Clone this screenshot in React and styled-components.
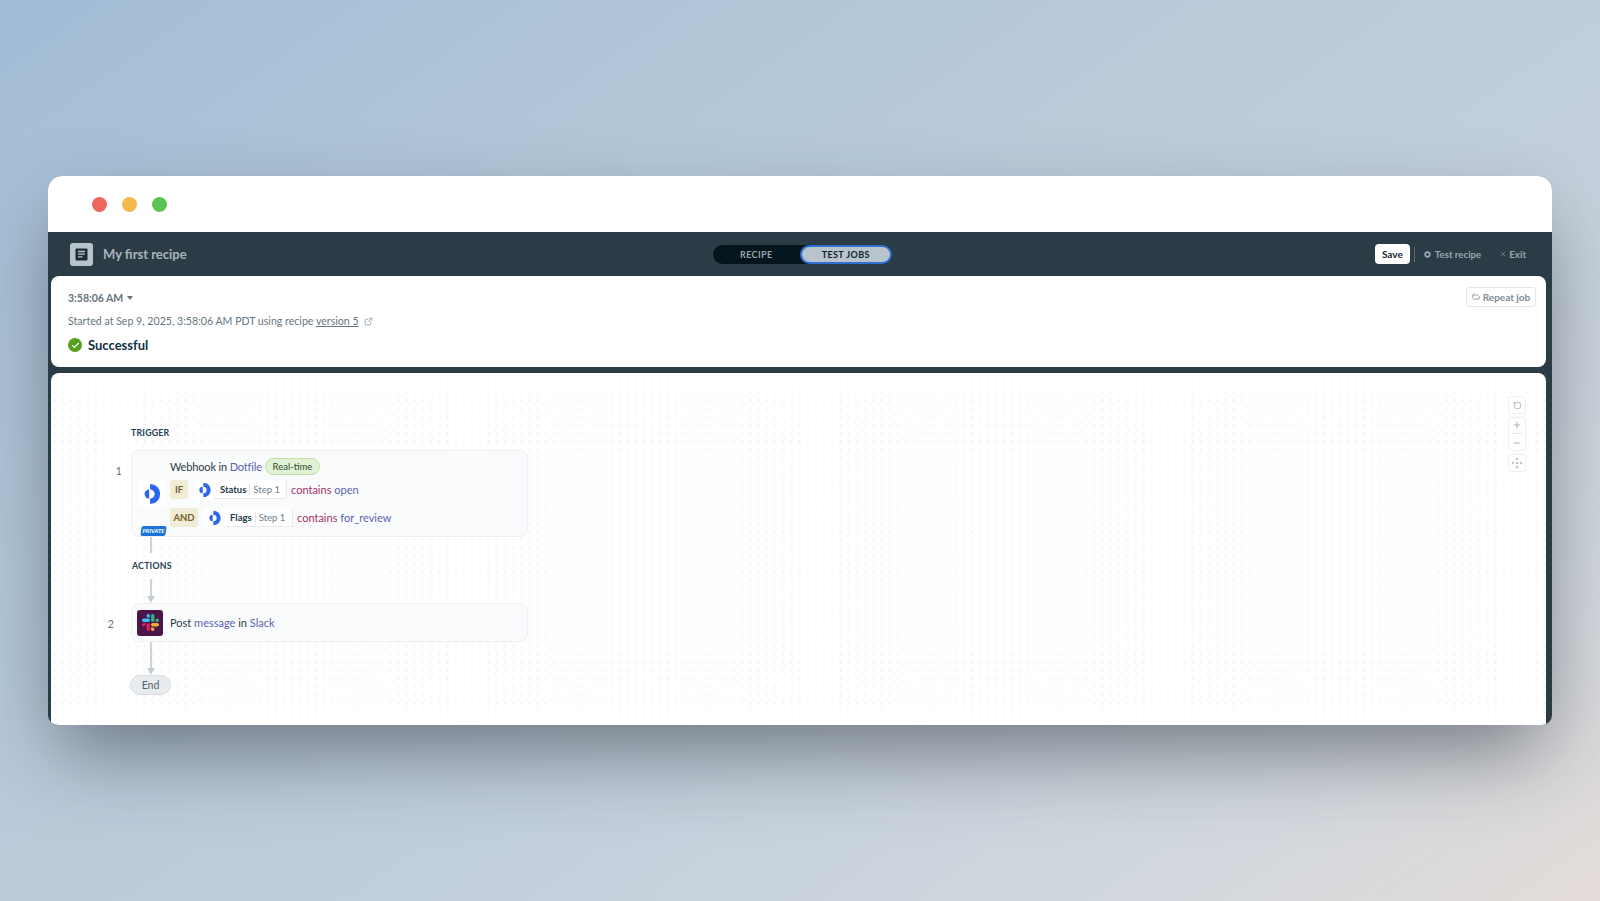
import styled, { createGlobalStyle } from "styled-components";
import { Check, ExternalLink, Minus, Plus, RotateCcw, X } from "lucide-react";

const GlobalStyle = createGlobalStyle`
  html, body {
    margin: 0;
    height: 901px;
    overflow: hidden;
  }
  body {
    font-family: Lato, "Noto Sans", sans-serif;
    color: #2c3c46;
  }
`;

const Page = styled.div`
  height: 901px;
  box-sizing: border-box;
  padding: 176px 48px 0;
  background: linear-gradient(145deg, #a2bcd6 0%, #b4c7d8 30%, #c3d0dc 62%, #d3d8de 85%, #e4dcd8 100%);
`;

const Window = styled.div`
  height: 549px;
  display: flex;
  flex-direction: column;
  border-radius: 14px 14px 10px 10px;
  overflow: hidden;
  background: #2c3c46;
  box-shadow: 0 35px 80px -10px rgba(40, 45, 55, 0.55);
`;

const TitleBar = styled.div`
  height: 56px;
  flex: none;
  display: flex;
  align-items: center;
  gap: 15px;
  padding-left: 44px;
  background: #fff;
`;

const Light = styled.span`
  width: 15px;
  height: 15px;
  border-radius: 50%;
  background: ${(p) => p.$color};
`;

const Toolbar = styled.div`
  height: 44px;
  flex: none;
  display: grid;
  grid-template-columns: 1fr auto 1fr;
  align-items: center;
  padding: 0 26px 0 22px;
`;

const Brand = styled.div`
  display: flex;
  align-items: center;
  gap: 10px;
  font-size: 13px;
  font-weight: 700;
  color: #abb4bc;
`;

const BrandIcon = styled.span`
  width: 23px;
  height: 23px;
  border-radius: 3px;
  background: #b9c3cc;
  display: flex;
  align-items: center;
  justify-content: center;
`;

const Toggle = styled.div`
  display: flex;
  width: 179px;
  height: 19px;
  margin-left: 8px;
  border-radius: 10px;
  background: #04151d;
`;

const ToggleItem = styled.div`
  flex: 1;
  display: flex;
  align-items: center;
  justify-content: center;
  box-sizing: border-box;
  border-radius: 10px;
  font-size: 9px;
  font-weight: 700;
  letter-spacing: 0.4px;
  color: ${(p) => (p.$active ? "#10242e" : "#9aa5ad")};
  background: ${(p) => (p.$active ? "#b9c3cc" : "transparent")};
  border: ${(p) => (p.$active ? "2px solid #2f6fd2" : "none")};
`;

const Actions = styled.div`
  display: flex;
  align-items: center;
  justify-content: flex-end;
  font-size: 9.7px;
  font-weight: 700;
  color: #9aa6ae;
`;

const SaveButton = styled.button`
  width: 35px;
  height: 20px;
  padding: 0;
  border: 0;
  border-radius: 4px;
  background: #fff;
  font: 700 10px Lato, sans-serif;
  color: #10242e;
`;

const Divider = styled.span`
  width: 1px;
  height: 15px;
  margin: 0 9px 0 4px;
  background: #5a6871;
`;

const ToolLink = styled.span`
  display: flex;
  align-items: center;
  gap: ${(p) => p.$inner}px;
  margin-left: ${(p) => p.$gap || 0}px;
`;

const Panel = styled.div`
  margin: 0 6px 0 3px;
  background: #fff;
  border-radius: 8px;
  position: relative;
`;

const JobPanel = styled(Panel)`
  height: 91px;
  box-sizing: border-box;
  padding: 15px 17px 0;
  flex: none;
`;

const JobTime = styled.div`
  display: flex;
  align-items: center;
  gap: 4px;
  height: 14px;
  font-size: 10.5px;
  font-weight: 700;
  color: #66767f;
`;

const Caret = styled.span`
  border-left: 3.5px solid transparent;
  border-right: 3.5px solid transparent;
  border-top: 4px solid #66767f;
`;

const JobMeta = styled.div`
  display: flex;
  align-items: center;
  gap: 5px;
  margin-top: 9px;
  height: 14px;
  font-size: 10.6px;
  color: #66767f;
`;

const VersionLink = styled.span`
  text-decoration: underline;
`;

const JobStatus = styled.div`
  display: flex;
  align-items: center;
  gap: 6px;
  margin-top: 9px;
  font-size: 13px;
  font-weight: 700;
  color: #10303f;
`;

const StatusDot = styled.span`
  width: 14px;
  height: 14px;
  border-radius: 50%;
  background: #55a01e;
  display: flex;
  align-items: center;
  justify-content: center;
`;

const RepeatButton = styled.div`
  position: absolute;
  top: 11px;
  right: 10px;
  width: 70px;
  height: 20px;
  box-sizing: border-box;
  border: 1px solid #e2e7eb;
  border-radius: 3px;
  display: flex;
  align-items: center;
  justify-content: center;
  gap: 3px;
  font-size: 10px;
  font-weight: 700;
  color: #7c8c98;
`;

const CanvasPanel = styled(Panel)`
  flex: 1;
  margin-top: 6px;
  margin-bottom: 0;
  padding: 54px 0 0 80px;
  border-radius: 8px 8px 0 0;
  background-color: #fff;
  background-image: radial-gradient(circle, #e6e9ec 0.7px, transparent 1px);
  background-size: 8.2px 8.2px;
  background-position: 7.6px -1.1px;
`;

const SectionLabel = styled.div`
  height: 12px;
  line-height: 12px;
  font-size: 8.8px;
  font-weight: 700;
  letter-spacing: 0.2px;
  color: #254352;
  margin-left: ${(p) => p.$indent || 0}px;
  margin-top: ${(p) => p.$top || 0}px;
`;

const StepRow = styled.div`
  position: relative;
  width: 397px;
`;

const StepNumber = styled.span`
  position: absolute;
  top: ${(p) => p.$top}px;
  right: calc(100% + ${(p) => p.$gap}px);
  font-size: 11px;
  color: #5f7480;
`;

const StepCard = styled.div`
  box-sizing: border-box;
  height: ${(p) => p.$height}px;
  margin-top: ${(p) => p.$top || 0}px;
  display: flex;
  align-items: center;
  gap: ${(p) => p.$gap}px;
  padding-left: ${(p) => p.$pad}px;
  border: 1px solid #eef1f4;
  border-radius: 8px;
  background: #fafbfd;
  font-size: 11px;
`;

const LogoBox = styled.span`
  width: ${(p) => p.$size}px;
  height: ${(p) => p.$size}px;
  flex: none;
  display: flex;
  align-items: center;
  justify-content: center;
  background: #fff;
  border-radius: 3px;
`;

const SlackBox = styled(LogoBox)`
  background: #4a154b;
`;

const StepBody = styled.div`
  display: flex;
  flex-direction: column;
  padding-bottom: 2px;
`;

const StepLine = styled.div`
  display: flex;
  align-items: center;
  height: ${(p) => p.$height || 17}px;
  margin-top: ${(p) => p.$top || 0}px;
`;

const StepTitle = styled.span`
  letter-spacing: -0.15px;
`;

const Accent = styled.span`
  color: #5a62ae;
`;

const Keyword = styled.span`
  color: #a03266;
`;

const RealTime = styled.span`
  margin-left: 3px;
  height: 17px;
  width: 55px;
  box-sizing: border-box;
  display: flex;
  align-items: center;
  justify-content: center;
  border: 1px solid #bfe0a4;
  border-radius: 9px;
  background: #e2f2d4;
  font-size: 9.5px;
  color: #2c4a35;
`;

const CondBadge = styled.span`
  height: 19px;
  width: ${(p) => p.$width}px;
  margin-right: 6px;
  display: flex;
  align-items: center;
  justify-content: center;
  border-radius: 3px;
  background: #f1ecd6;
  font-size: 9.5px;
  font-weight: 700;
  color: #75601f;
`;

const Pill = styled.span`
  display: flex;
  align-items: center;
  height: 19px;
  width: ${(p) => p.$width}px;
  box-sizing: border-box;
  padding-left: 6px;
  margin-right: 4px;
  background: #fff;
  border-right: 1px solid #e6eaee;
  border-bottom: 1px solid #e6eaee;
  border-radius: 0 2px 2px 0;
  font-size: 9.5px;
`;

const PillName = styled.b`
  color: #1d3a48;
  padding-right: 3px;
  border-right: 1px solid #dfe4e8;
  margin-right: 3px;
`;

const PillStep = styled.span`
  color: #6f808b;
`;

const PrivateTag = styled.span`
  position: absolute;
  left: 10px;
  top: 76px;
  width: 25px;
  height: 10px;
  display: flex;
  align-items: center;
  justify-content: center;
  border-radius: 2px;
  transform: skewX(-8deg);
  background: #1c74d8;
  color: #fff;
  font-size: 5.5px;
  font-weight: 700;
`;

const Connector = styled.div`
  display: flex;
  flex-direction: column;
  align-items: center;
  width: 12px;
  margin: ${(p) => p.$top || 0}px 0 0 14px;
`;

const ConnectorLine = styled.span`
  width: 1.5px;
  height: ${(p) => p.$height}px;
  background: #cdd4da;
`;

const ConnectorArrow = styled.span`
  border-left: 4px solid transparent;
  border-right: 4px solid transparent;
  border-top: 7px solid #c6ced5;
`;

const EndPill = styled.div`
  width: 41px;
  height: 20px;
  margin-left: -1px;
  box-sizing: border-box;
  display: flex;
  align-items: center;
  justify-content: center;
  border: 1px solid #d7dde2;
  border-radius: 10px;
  background: #e8ecef;
  font-size: 10.5px;
  color: #4d6270;
`;

const ZoomControls = styled.div`
  position: absolute;
  top: 23px;
  right: 20px;
  display: flex;
  flex-direction: column;
  gap: 3px;
`;

const ZoomGroup = styled.div`
  width: 18px;
  height: ${(p) => p.$height}px;
  box-sizing: border-box;
  display: flex;
  flex-direction: column;
  align-items: center;
  justify-content: space-around;
  background: #fff;
  border: 1px solid #eceff2;
  border-radius: 3px;
  color: #9aa6b0;
`;

const ZoomRule = styled.span`
  width: 10px;
  height: 1px;
  background: #e2e6ea;
`;

const DotfileLogo = ({ size }) => (
  <svg width={size} height={size} viewBox="-1 0 24 24">
    <path d="M10 1 A11 11 0 0 1 10 23 V17 A5 5 0 0 0 10 7 Z" fill="#2a66ee" />
    <path d="M9 7 V17 A5 5 0 0 1 9 7 Z" fill="#2a66ee" />
  </svg>
);

const SlackLogo = () => (
  <svg width="17" height="17" viewBox="0 0 2447.6 2452.5">
    <path d="M897.4 0c-135.3.1-244.8 109.9-244.7 245.2-.1 135.3 109.5 245.1 244.8 245.2h244.8V245.3c.1-135.3-109.5-245.1-244.9-245.3m0 654H244.8C109.5 654.1-.1 763.9 0 899.2c-.2 135.3 109.4 245.1 244.7 245.3h652.7c135.3-.1 244.9-109.9 244.8-245.2.1-135.4-109.5-245.2-244.8-245.3z" fill="#36c5f0" />
    <path d="M2447.6 899.2c.1-135.3-109.5-245.1-244.8-245.2-135.3.1-244.9 109.9-244.8 245.2v245.3h244.8c135.3-.1 244.9-109.9 244.8-245.3zm-652.7 0V245.2c.1-135.2-109.4-245-244.7-245.2-135.3.1-244.9 109.9-244.8 245.2v654c-.2 135.3 109.4 245.1 244.7 245.3 135.3-.1 244.9-109.9 244.8-245.3z" fill="#2eb67d" />
    <path d="M1550.1 2452.5c135.3-.1 244.9-109.9 244.8-245.2.1-135.3-109.5-245.1-244.8-245.2h-244.8v245.2c-.1 135.2 109.5 245 244.8 245.2zm0-654.1h652.7c135.3-.1 244.9-109.9 244.8-245.2.2-135.3-109.4-245.1-244.7-245.3h-652.7c-135.3.1-244.9 109.9-244.8 245.2-.1 135.4 109.4 245.2 244.7 245.3z" fill="#ecb22e" />
    <path d="M0 1553.2c-.1 135.3 109.5 245.1 244.8 245.2 135.3-.1 244.9-109.9 244.8-245.2v-245.2H244.8C109.5 1308.1-.1 1417.9 0 1553.2zm652.7 0v654c-.2 135.3 109.4 245.1 244.7 245.3 135.3-.1 244.9-109.9 244.8-245.2v-653.9c.2-135.3-109.4-245.1-244.7-245.3-135.4 0-244.9 109.8-244.8 245.1z" fill="#e01e5a" />
  </svg>
);

const RecipeIcon = () => (
  <svg width="15" height="15" viewBox="0 0 15 15">
    <rect x="1.5" y="1.5" width="12" height="12" rx="1" fill="#1c2c36" />
    <path d="M4 4.5h7M4 7.2h7M4 9.9h4.5" stroke="#b9c3cc" strokeWidth="1.3" />
  </svg>
);

const GearIcon = () => (
  <svg width="7" height="7" viewBox="0 0 8 8">
    <circle cx="4" cy="4" r="2.6" fill="none" stroke="#9aa6ae" strokeWidth="2" />
  </svg>
);

const RepeatIcon = () => (
  <svg width="8" height="8" viewBox="0 0 10 10" fill="none" stroke="#7c8c98" strokeWidth="1">
    <path d="M1 6V2.5h7M1 7.5h8V4" />
    <path d="M2.6 .8 1 2.5" />
  </svg>
);

const FitIcon = () => (
  <svg width="12" height="12" viewBox="0 0 12 12" fill="#9aa6b0">
    <circle cx="6" cy="6" r="1" />
    <path d="M6 .5 7.6 2.6H4.4zM6 11.5 4.4 9.4h3.2zM.5 6l2.1-1.6v3.2zM11.5 6 9.4 7.6V4.4z" />
  </svg>
);

const App = () => (
  <Page>
    <GlobalStyle />
    <Window>
      <TitleBar>
        <Light $color="#ee675c" />
        <Light $color="#f5b84a" />
        <Light $color="#5cc452" />
      </TitleBar>

      <Toolbar>
        <Brand>
          <BrandIcon>
            <RecipeIcon />
          </BrandIcon>
          My first recipe
        </Brand>
        <Toggle>
          <ToggleItem>RECIPE</ToggleItem>
          <ToggleItem $active>TEST JOBS</ToggleItem>
        </Toggle>
        <Actions>
          <SaveButton>Save</SaveButton>
          <Divider />
          <ToolLink $inner={4}>
            <GearIcon />
            Test recipe
          </ToolLink>
          <ToolLink $inner={2} $gap={18}>
            <X size={8} strokeWidth={1.5} />
            Exit
          </ToolLink>
        </Actions>
      </Toolbar>

      <JobPanel>
        <JobTime>
          3:58:06 AM
          <Caret />
        </JobTime>
        <JobMeta>
          <span>
            Started at Sep 9, 2025, 3:58:06 AM PDT using recipe{" "}
            <VersionLink>version 5 </VersionLink>
          </span>
          <ExternalLink size={9} color="#8896a0" />
        </JobMeta>
        <JobStatus>
          <StatusDot>
            <Check size={9} color="#fff" strokeWidth={3} />
          </StatusDot>
          Successful
        </JobStatus>
        <RepeatButton>
          <RepeatIcon />
          Repeat job
        </RepeatButton>
      </JobPanel>

      <CanvasPanel>
        <SectionLabel>TRIGGER</SectionLabel>
        <StepRow>
          <StepNumber $top={14} $gap={9}>1</StepNumber>
          <StepCard $height={87} $top={11} $gap={6} $pad={6}>
            <LogoBox $size={26}>
              <DotfileLogo size={22} />
            </LogoBox>
            <StepBody>
              <StepLine>
                <StepTitle>
                  Webhook in <Accent>Dotfile</Accent>
                </StepTitle>
                <RealTime>Real-time</RealTime>
              </StepLine>
              <StepLine $height={19} $top={5}>
                <CondBadge $width={18}>IF</CondBadge>
                <LogoBox $size={20}>
                  <DotfileLogo size={16} />
                </LogoBox>
                <Pill $width={73}>
                  <PillName>Status</PillName>
                  <PillStep>Step 1</PillStep>
                </Pill>
                <span>
                  <Keyword>contains</Keyword> <Accent>open</Accent>
                </span>
              </StepLine>
              <StepLine $height={19} $top={9}>
                <CondBadge $width={28}>AND</CondBadge>
                <LogoBox $size={20}>
                  <DotfileLogo size={16} />
                </LogoBox>
                <Pill $width={69}>
                  <PillName>Flags</PillName>
                  <PillStep>Step 1</PillStep>
                </Pill>
                <span>
                  <Keyword>contains</Keyword> <Accent>for_review</Accent>
                </span>
              </StepLine>
            </StepBody>
            <PrivateTag>PRIVATE</PrivateTag>
          </StepCard>
        </StepRow>
        <Connector>
          <ConnectorLine $height={16} />
        </Connector>
        <SectionLabel $indent={1} $top={7}>ACTIONS</SectionLabel>
        <Connector $top={7}>
          <ConnectorLine $height={17} />
          <ConnectorArrow />
        </Connector>
        <StepRow>
          <StepNumber $top={14} $gap={17}>2</StepNumber>
          <StepCard $height={39} $gap={7} $pad={5}>
            <SlackBox $size={26}>
              <SlackLogo />
            </SlackBox>
            <StepLine>
              <span>
                Post <Accent>message</Accent> in <Accent>Slack</Accent>
              </span>
            </StepLine>
          </StepCard>
        </StepRow>
        <Connector>
          <ConnectorLine $height={26} />
          <ConnectorArrow />
        </Connector>
        <EndPill>End</EndPill>
        <ZoomControls>
          <ZoomGroup $height={18}>
            <RotateCcw size={9} />
          </ZoomGroup>
          <ZoomGroup $height={34}>
            <Plus size={10} />
            <ZoomRule />
            <Minus size={10} />
          </ZoomGroup>
          <ZoomGroup $height={18}>
            <FitIcon />
          </ZoomGroup>
        </ZoomControls>
      </CanvasPanel>
    </Window>
  </Page>
);

export default App;
